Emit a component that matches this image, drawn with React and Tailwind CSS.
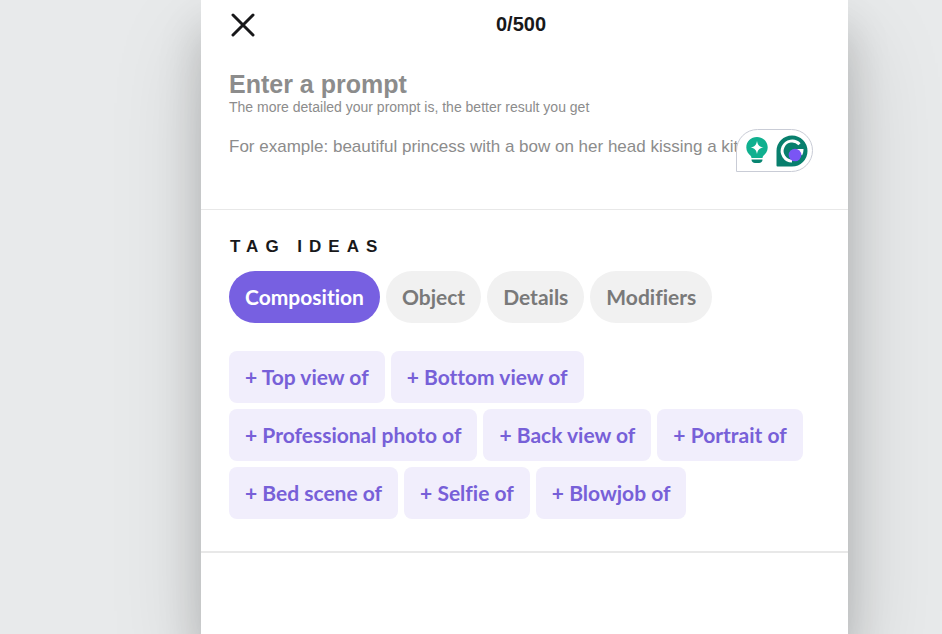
import React, { useState } from "react";

const categories = ["Composition", "Object", "Details", "Modifiers"];

const ideas = [
  "Top view of",
  "Bottom view of",
  "Professional photo of",
  "Back view of",
  "Portrait of",
  "Bed scene of",
  "Selfie of",
  "Blowjob of",
];

function CloseIcon() {
  return (
    <svg width="26" height="26" viewBox="0 0 26 26" fill="none" stroke="#18181a" strokeWidth="3" strokeLinecap="round" aria-hidden="true">
      <path d="M3 4L23 24M23 4L3 24" />
    </svg>
  );
}

function BulbIcon() {
  return (
    <svg width="22" height="27" viewBox="0 0 22 27" aria-hidden="true">
      <path d="M11 0C4.9 0 .3 4.600.3 10.400c0 3.800 2.300 6.500 4.300 8.300.6.600.8 1.500.9 2.300h11c.1-.8.300-1.700.9-2.300 2-1.800 4.300-4.500 4.300-8.300C21.700 4.600 17.100 0 11 0z" fill="#10b08f" />
      <path d="M11 4c.9 4.300 2.200 5.600 6.500 6.500-4.300.9-5.600 2.200-6.500 6.500-.9-4.300-2.200-5.600-6.500-6.500C8.800 9.600 10.100 8.300 11 4z" fill="#fff" />
      <path d="M5.500 22.500h11c0 2.200-1.500 3.500-3.500 3.500H9c-2 0-3.500-1.300-3.500-3.500z" fill="#078571" />
    </svg>
  );
}

function AssistantIcon() {
  return (
    <svg width="32" height="32" viewBox="0 0 32 32" aria-hidden="true">
      <path d="M16 .5A15.500 15.500 0 0 1 16 31.500H1.500A1 1 0 0 1 .5 30.500V16A15.500 15.500 0 0 1 16 .5z" fill="#087f6d" />
      <path d="M23.500 9.200A10 10 0 1 0 16 26" fill="none" stroke="#fff" strokeWidth="3" />
      <path d="M18 14h9.500c0 2.500-.5 4.500-1.500 6.500L22 16.500z" fill="#fff" />
      <circle cx="19" cy="20" r="6.300" fill="#7a55f4" />
    </svg>
  );
}

export default function App() {
  const [active, setActive] = useState("Composition");
  const [prompt, setPrompt] = useState("");

  return (
    <div className="min-h-screen overflow-hidden bg-[#e8eaeb] pr-[94px] pl-[201px] font-['Liberation_Sans',Arial,sans-serif]">
      <main className="min-h-screen bg-white shadow-[0_30px_40px_rgba(0,0,0,0.17),4px_40px_90px_rgba(0,0,0,0.15)]">
        <header className="grid h-12 grid-cols-[1fr_auto_1fr] items-center pr-9 pl-[29px]">
          <button type="button" aria-label="Close" className="justify-self-start">
            <CloseIcon />
          </button>
          <span className="text-xl font-bold text-[#18181a]">{prompt.length}/500</span>
        </header>

        <section className="border-b border-[#e8e8e8] px-7 pt-6 pb-[50px] text-[#8c8c8c]">
          <label htmlFor="prompt" className="block text-[25px] leading-6 font-bold">
            Enter a prompt
          </label>
          <p className="text-sm leading-[22px]">The more detailed your prompt is, the better result you get</p>
          <div className="relative mt-[17px] mr-20">
            <input
              id="prompt"
              type="text"
              maxLength={500}
              value={prompt}
              onChange={(e) => setPrompt(e.target.value)}
              placeholder="For example: beautiful princess with a bow on her head kissing a kitten"
              className="block h-6 w-full text-[17px] outline-none placeholder:text-[#8c8c8c]"
            />
            <div className="absolute top-[-6px] left-full flex h-[43px] -translate-x-1 items-center gap-2 rounded-l-[22px] rounded-r-[22px] rounded-bl-none border border-[#c9ccd6] bg-white pr-1 pl-[9px]">
              <BulbIcon />
              <AssistantIcon />
            </div>
          </div>
        </section>

        <section className="border-b-2 border-[#e8e8e8] px-7 pt-[25px] pb-8">
          <h2 className="pl-px text-[17px] leading-6 font-bold tracking-[7px] text-[#18181a]">TAG IDEAS</h2>
          <div className="mt-3 flex flex-wrap gap-1.5 font-['Lato',sans-serif] text-[21px] font-bold [font-variant-ligatures:none]">
            {categories.map((name) => (
              <button
                key={name}
                type="button"
                aria-pressed={active === name}
                onClick={() => setActive(name)}
                className={
                  active === name
                    ? "h-13 rounded-full bg-[#7760e1] px-4 text-white"
                    : "h-13 rounded-full bg-[#f1f1f1] px-4 text-[#797979]"
                }
              >
                {name}
              </button>
            ))}
          </div>
          <div className="mt-7 flex flex-wrap gap-1.5 font-['Lato',sans-serif] text-[21px] font-bold text-[#7760d8] [font-variant-ligatures:none]">
            {ideas.map((idea) => (
              <button key={idea} type="button" className="h-13 rounded-lg bg-[#f1eefc] px-4">
                + {idea}
              </button>
            ))}
          </div>
        </section>
      </main>
    </div>
  );
}
